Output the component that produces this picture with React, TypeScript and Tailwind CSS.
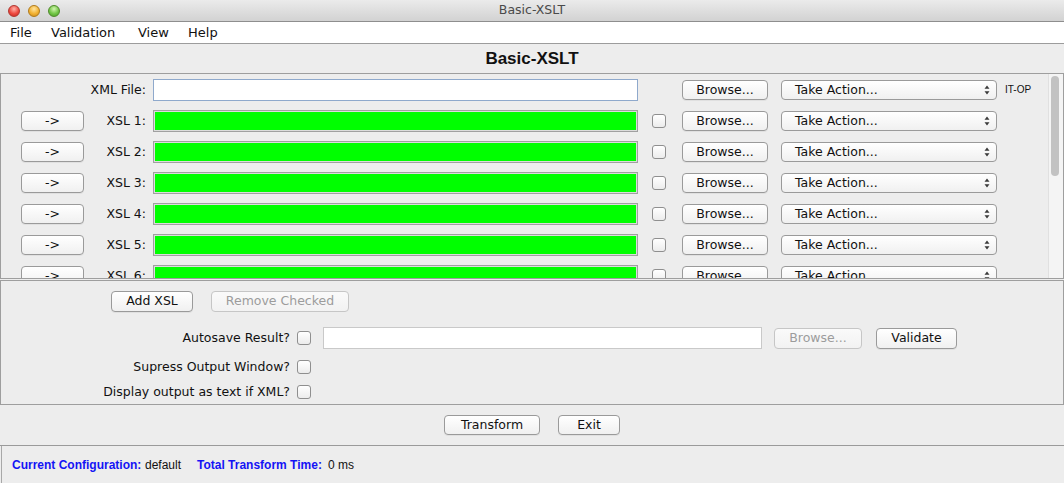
import React from "react";

const btn =
  "flex items-center justify-center shrink-0 rounded-[4px] border border-[#9a9a9a] bg-[linear-gradient(#ffffff,#f0f0f0)] shadow-[0_1px_0_rgba(0,0,0,0.05)] text-[12.5px] text-[#111] leading-none whitespace-nowrap";
const btnDisabled =
  "flex items-center justify-center shrink-0 rounded-[4px] border border-[#c6c6c6] bg-[linear-gradient(#fafafa,#f2f2f2)] text-[12.5px] text-[#9c9c9c] leading-none whitespace-nowrap";

function Check() {
  return (
    <div className="w-[14px] h-[14px] shrink-0 rounded-[3px] border border-[#8f8f8f] bg-[linear-gradient(#ffffff,#ececec)]" />
  );
}

function Select() {
  return (
    <div className="flex items-center shrink-0 h-[20px] w-[216px] rounded-[4px] border border-[#9a9a9a] bg-[linear-gradient(#ffffff,#f0f0f0)] pl-[13px] pr-[6px] text-[12.5px] leading-none text-[#111]">
      <span className="flex-1 whitespace-nowrap">Take Action...</span>
      <svg width="6" height="10" viewBox="0 0 6 10">
        <path d="M3 0.5 L5.5 3.8 H0.5 Z M3 9.5 L0.5 6.2 H5.5 Z" fill="#3a3a3a" />
      </svg>
    </div>
  );
}

function Row({ n }: { n: number | null }) {
  const isXml = n === null;
  return (
    <div className="flex items-center h-[22px] shrink-0 pl-[20px]">
      {isXml ? (
        <div className="w-[63px] shrink-0" />
      ) : (
        <div className={btn + " w-[63px] h-[20px]"}>-&gt;</div>
      )}
      <div className="w-[62px] shrink-0 text-right text-[12.5px] leading-none text-[#111] whitespace-nowrap">
        {isXml ? "XML File:" : `XSL ${n}:`}
      </div>
      {isXml ? (
        <div className="ml-[7px] w-[485px] h-[22px] shrink-0 border border-[#8fa9cc] bg-white" />
      ) : (
        <div className="ml-[7px] w-[485px] h-[22px] shrink-0 border border-[#a0a0a0] bg-[#00ff00] shadow-[inset_0_0_0_1px_#dcdcdc]" />
      )}
      <div className="ml-[14px] w-[14px] shrink-0 flex">{isXml ? null : <Check />}</div>
      <div className={btn + " ml-[16px] w-[86px] h-[20px]"}>Browse...</div>
      <div className="ml-[13px]">
        <Select />
      </div>
      {isXml ? (
        <span className="ml-[8px] text-[10px] leading-none font-[family-name:Liberation_Sans,Arial,sans-serif] text-[#111]">
          IT-OP
        </span>
      ) : null}
    </div>
  );
}

export default function App() {
  return (
    <div className="w-[1064px] h-[483px] overflow-hidden bg-[#ededed] flex flex-col font-[family-name:Lucida_Grande,DejaVu_Sans,sans-serif] text-[#111]">
      {/* Title bar */}
      <div className="relative h-[22px] shrink-0 border-b border-[#8e8e8e] bg-[linear-gradient(#ebebeb,#d2d2d2)] flex items-center justify-center">
        <div className="absolute left-[8px] top-[5px] flex gap-[8px]">
          <div className="w-[12px] h-[12px] rounded-full border border-[#b0362f] bg-[radial-gradient(circle_at_50%_30%,#ffb2a8,#ee4a40_55%,#c5281f)]" />
          <div className="w-[12px] h-[12px] rounded-full border border-[#b07a1a] bg-[radial-gradient(circle_at_50%_30%,#ffe5a0,#f2b233_55%,#c9891a)]" />
          <div className="w-[12px] h-[12px] rounded-full border border-[#4f8a2a] bg-[radial-gradient(circle_at_50%_30%,#d2f5b0,#72c646_55%,#4a9a28)]" />
        </div>
        <span className="text-[12.5px] leading-none text-[#4a4a4a]">Basic-XSLT</span>
      </div>

      {/* Menu bar */}
      <div className="h-[22px] shrink-0 bg-white border-b border-[#9c9c9c] flex items-center pl-[10px] text-[13px] leading-none text-[#111]">
        <span className="w-[41px]">File</span>
        <span className="w-[87px]">Validation</span>
        <span className="w-[50px]">View</span>
        <span>Help</span>
      </div>

      {/* Header */}
      <div className="h-[29px] shrink-0 flex items-center justify-center">
        <span className="text-[17px] font-bold leading-none font-[family-name:Liberation_Sans,Arial,sans-serif] text-[#111]">
          Basic-XSLT
        </span>
      </div>

      {/* Scroll panel */}
      <div className="h-[206px] shrink-0 flex border border-[#9e9e9e]">
        <div className="flex-1 overflow-hidden flex flex-col gap-[9px] pt-[5px]">
          <Row n={null} />
          {[1, 2, 3, 4, 5, 6].map((n) => (
            <Row key={n} n={n} />
          ))}
        </div>
        <div className="w-[15px] shrink-0 border-l border-[#e0e0e0] bg-[#f4f4f4] pt-[2px] pl-[2px]">
          <div className="w-[8px] h-[100px] rounded-full bg-[#c2c2c2]" />
        </div>
      </div>

      {/* Options panel */}
      <div className="mt-[1px] h-[125px] shrink-0 border border-[#9e9e9e] flex flex-col">
        <div className="flex mt-[10px] pl-[110px] gap-[18px]">
          <div className={btn + " w-[82px] h-[21px]"}>Add XSL</div>
          <div className={btnDisabled + " w-[138px] h-[21px]"}>Remove Checked</div>
        </div>
        <div className="flex items-center h-[22px] mt-[15px]">
          <div className="w-[289px] text-right text-[12.5px] leading-none">Autosave Result?</div>
          <div className="ml-[7px]">
            <Check />
          </div>
          <div className="ml-[12px] w-[439px] h-[22px] border border-[#c9c9c9] bg-white" />
          <div className={btnDisabled + " ml-[12px] w-[88px] h-[21px]"}>Browse...</div>
          <div className={btn + " ml-[14px] w-[81px] h-[21px]"}>Validate</div>
        </div>
        <div className="flex items-center h-[20px] mt-[8px]">
          <div className="w-[289px] text-right text-[12.5px] leading-none">Supress Output Window?</div>
          <div className="ml-[7px]">
            <Check />
          </div>
        </div>
        <div className="flex items-center h-[20px] mt-[5px]">
          <div className="w-[289px] text-right text-[12.5px] leading-none">Display output as text if XML?</div>
          <div className="ml-[7px]">
            <Check />
          </div>
        </div>
      </div>

      {/* Transform row */}
      <div className="h-[40px] shrink-0 flex items-center justify-center gap-[18px]">
        <div className={btn + " w-[96px] h-[20px]"}>Transform</div>
        <div className={btn + " w-[62px] h-[20px]"}>Exit</div>
      </div>

      {/* Status bar */}
      <div className="flex-1 border-t border-[#9a9a9a] flex">
        <div className="ml-[1px] flex-1 border-l border-[#a8a8a8] flex items-center pl-[10px] text-[12px] leading-none font-[family-name:Liberation_Sans,Arial,sans-serif] whitespace-nowrap">
          <span className="w-[133px] font-bold text-[#1414f5]">Current Configuration:</span>
          <span className="w-[52px] text-[#111]">default</span>
          <span className="w-[131px] font-bold text-[#1414f5]">Total Transform Time:</span>
          <span className="text-[#111]">0 ms</span>
        </div>
      </div>
    </div>
  );
}
